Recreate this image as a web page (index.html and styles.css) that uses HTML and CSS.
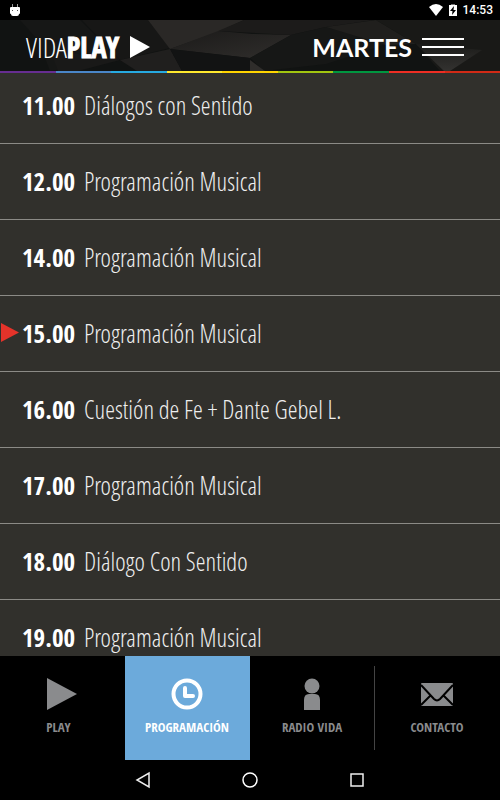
FILE: index.html
```html
<!DOCTYPE html>
<html lang="es">
<head>
<meta charset="utf-8">
<meta name="viewport" content="width=device-width, initial-scale=1">
<title>Vida Play</title>
<link rel="stylesheet" href="styles.css">
</head>
<body>
<div class="status">
  <svg class="droid" width="10" height="12" viewBox="0 0 10 12"><path fill="#999" d="M2 0h1v4H2zM7 0h1v4H7z"/><rect y="3" width="10" height="7" rx="1" fill="#fff"/><rect x="1" y="6" width="8" height="6" rx="2" fill="#fff"/><path fill="#555" d="M2 6h1v1H2zM7 6h1v1H7z"/></svg>
  <div class="status-right">
    <svg width="14" height="12" viewBox="0 0 14 12"><path fill="#fff" d="M0 3Q7-3 14 3L7 12Z"/></svg>
    <svg width="8" height="12" viewBox="0 0 8 12"><path fill="#777" d="M2 0h4v1H2z"/><path fill="#fff" d="M0 1h8v11H0z"/><path fill="#000" d="M5 2L1 7h2.500L3 11l4-5H4.500z"/></svg>
    <time>14:53</time>
  </div>
</div>
<header class="header">
  <svg class="facets" viewBox="0 0 500 51" preserveAspectRatio="none">
    <defs>
      <linearGradient id="a" x1="0" y1="0" x2="1" y2="1"><stop offset="0" stop-color="#1b1a19"/><stop offset="1" stop-color="#302e2c"/></linearGradient>
      <linearGradient id="b" x1="0" y1="0" x2="0" y2="1"><stop offset="0" stop-color="#1c1c1a"/><stop offset="1" stop-color="#333230"/></linearGradient>
    </defs>
    <path fill="#111312" d="M0 0h500v51H0z"/>
    <path fill="#161716" d="M20 0h60l40 40-70 11L38 20z"/>
    <path fill="#171716" d="M82 0h66l22 28-50 12z"/>
    <path fill="#2a2826" d="M148 0h96l-26 12-48 17z"/>
    <path fill="url(#a)" d="M170 29l48-18 34 3 39 1-41 23z"/>
    <path fill="#201f1e" d="M120 40l50-11 12 22h-45z"/>
    <path fill="#191918" d="M50 30l70 10-42 11H58z"/>
    <path fill="#121313" d="M170 29l80 9 14 13h-82z"/>
    <path fill="#1c1b1a" d="M218 11L244 0h130l-48 7-35 8z"/>
    <path fill="#161716" d="M291 15l35-8 60 17-60 20-62 7-14-13z"/>
    <path fill="#201f1d" d="M326 7L376 0l40 24-30 1z"/>
    <path fill="#2f2d2b" d="M250 40l15 11h-15z"/>
    <path fill="#191917" d="M376 0h124v51h-60l-24-27z"/>
    <path fill="url(#b)" d="M416 24l66 6-32 21h-6z"/>
  </svg>
  <h1 class="logo"><span class="logo-light">VIDA</span><span class="logo-bold">PLAY</span>
    <svg width="20" height="22" viewBox="0 0 20 22"><path fill="#fff" d="M0 0v22l20-11z"/></svg>
  </h1>
  <button class="day" aria-label="Martes, menú"><span>MARTES</span><span class="bars"></span></button>
</header>
<div class="stripe"><i class="c1"></i><i class="c2"></i><i class="c3"></i><i class="c4"></i><i class="c5"></i><i class="c6"></i><i class="c7"></i><i class="c8"></i><i class="c9"></i></div>
<main class="schedule">
  <ul>
    <li><time>11.00</time><span>Diálogos con Sentido</span></li>
    <li><time>12.00</time><span>Programación Musical</span></li>
    <li><time>14.00</time><span>Programación Musical</span></li>
    <li class="now"><time>15.00</time><span>Programación Musical</span></li>
    <li><time>16.00</time><span>Cuestión de Fe + Dante Gebel L.</span></li>
    <li><time>17.00</time><span>Programación Musical</span></li>
    <li><time>18.00</time><span>Diálogo Con Sentido</span></li>
    <li><time>19.00</time><span>Programación Musical</span></li>
  </ul>
</main>
<nav class="tabs">
  <a href="#play" class="play"><svg width="30" height="32" viewBox="0 0 30 32"><path fill="currentColor" d="M0 0v32l30-16z"/></svg><span>PLAY</span></a>
  <a href="#programacion" class="active" aria-current="page"><svg width="32" height="32" viewBox="0 0 32 32"><circle cx="16" cy="16" r="13.500" fill="none" stroke="currentColor" stroke-width="4"/><path d="M14 10v8h8" fill="none" stroke="currentColor" stroke-width="4" stroke-linecap="round" stroke-linejoin="round"/></svg><span>PROGRAMACIÓN</span></a>
  <a href="#radio"><svg width="16" height="32" viewBox="0 0 16 32"><circle cx="8" cy="8" r="7.500" fill="currentColor"/><path fill="currentColor" d="M0 32V22q0-6 5-6h6q5 0 5 6v10z"/></svg><span>RADIO VIDA</span></a>
  <a href="#contacto"><svg width="32" height="32" viewBox="0 0 32 32"><rect y="5" width="32" height="23" rx="1" fill="currentColor"/><path d="M0 7l13 14q3 3 6 0L32 7M0 27l9-9M32 27l-9-9" fill="none" stroke="#000" stroke-width="2"/></svg><span>CONTACTO</span></a>
</nav>
<div class="system">
  <button aria-label="Atrás"><svg width="16" height="18" viewBox="0 0 16 18"><path d="M14 2v14L2 9z" fill="none" stroke="#eee" stroke-width="1.500"/></svg></button>
  <button aria-label="Inicio"><svg width="16" height="16" viewBox="0 0 16 16"><circle cx="8" cy="8" r="7" fill="none" stroke="#fff" stroke-width="1.500"/></svg></button>
  <button aria-label="Recientes"><svg width="16" height="16" viewBox="0 0 16 16"><path d="M2 2h12v12H2z" fill="none" stroke="#eee" stroke-width="1.500"/></svg></button>
</div>
</body>
</html>
```
FILE: styles.css
```css
* { box-sizing: border-box; }
body {
  margin: 0;
  height: 100vh;
  display: flex;
  flex-direction: column;
  background: #000;
  color: #fff;
  font-family: "Open Sans Condensed", "Liberation Sans Narrow", "Open Sans", sans-serif;
}
svg { display: block; flex: none; }
button { background: none; border: 0; padding: 0; color: inherit; cursor: pointer; }
ul { list-style: none; margin: 0; padding: 0; }

.status {
  display: flex;
  justify-content: space-between;
  align-items: center;
  height: 20px;
  padding: 0 7px 0 10px;
  font: 500 12px/20px Roboto, sans-serif;
}
.status-right { display: flex; align-items: center; gap: 6px; }

.header {
  position: relative;
  display: flex;
  justify-content: space-between;
  align-items: center;
  height: 51px;
  padding: 2px 36px 0 26px;
}
.facets { position: absolute; inset: 0; width: 100%; height: 100%; }
.logo {
  position: relative;
  display: flex;
  align-items: center;
  margin: 0;
  font-size: 28px;
  line-height: 32px;
}
.logo svg { margin-left: 11px; }
.logo-light { font-family: "Open Sans Condensed Light", "Liberation Sans Narrow", sans-serif; font-weight: 300; }
.logo-bold { font-weight: 800; -webkit-text-stroke: 1px #fff; }
.day {
  position: relative;
  display: flex;
  align-items: center;
  gap: 10px;
  font: 700 25px/32px Lato, sans-serif;
}
.bars {
  width: 42px;
  height: 18px;
  border: solid #fff;
  border-width: 2px 0;
  background: linear-gradient(#fff, #fff) center / 100% 2px no-repeat;
}

.stripe { display: flex; height: 2px; }
.stripe i { flex: 1; }
.c1 { background: #662d91; }
.c2 { background: #4a86c8; }
.c3 { background: #27aae1; }
.c4 { background: #ffe92e; }
.c5 { background: #ffd400; }
.c6 { background: #a2c510; }
.c7 { background: #009640; }
.c8 { background: #ee2e24; }
.c9 { background: #d12a16; }

.schedule { flex: 1; min-height: 0; overflow: hidden; background: #31302c; }
.schedule ul { margin-top: -5px; }
.schedule li {
  position: relative;
  display: flex;
  align-items: center;
  gap: 9px;
  height: 76px;
  padding: 0 22px 2px;
  border-bottom: 1px solid #8b8a86;
  font-size: 25px;
  line-height: 36px;
}
.schedule time { font-weight: 700; }
.schedule span {
  font-family: "Open Sans Condensed Light", "Liberation Sans Narrow", sans-serif;
  font-weight: 300;
  color: #eee;
}
.now::before {
  content: "";
  position: absolute;
  left: 1px;
  width: 18px;
  height: 19px;
  background: #e5332a;
  clip-path: polygon(0 0, 100% 50%, 0 100%);
}

.tabs { display: grid; grid-template-columns: repeat(4, 1fr); height: 104px; }
.tabs a {
  position: relative;
  display: flex;
  flex-direction: column;
  align-items: center;
  gap: 8px;
  padding: 22px 1px 0 0;
  color: #8a8b8d;
  font-size: 13px;
  font-weight: 700;
  line-height: 18px;
  text-decoration: none;
}
.tabs .play { padding-right: 8px; }
.tabs .play svg { margin-left: 6px; }
.tabs .active { background: #6caadb; color: #fff; }
.tabs a:last-child::before {
  content: "";
  position: absolute;
  left: -1px;
  top: 10px;
  bottom: 10px;
  border-left: 1px solid #444;
}

.system {
  display: flex;
  justify-content: center;
  align-items: center;
  height: 40px;
  gap: 91px;
}
```
